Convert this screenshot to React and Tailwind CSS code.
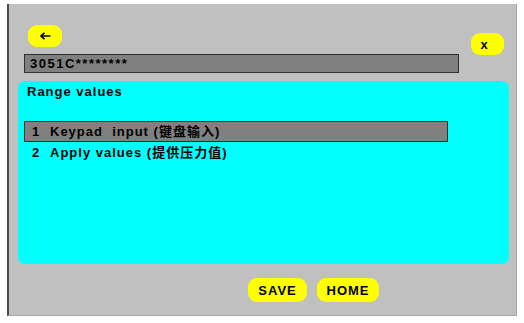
import React from 'react';

const font = { fontFamily: '"Liberation Sans", "Noto Sans CJK SC", Arial, sans-serif' };

const PillButton = ({ children, className = '' }) => (
  <button
    className={`flex items-center justify-center bg-[#ffff00] rounded-[9px] text-[13px] font-bold tracking-[1px] text-black leading-none ${className}`}
  >
    {children}
  </button>
);

const MenuRow = ({ num, label, selected }) => (
  <div
    className={`flex items-center h-[21px] w-[424px] ml-[6px] pl-[7px] text-[13px] font-bold tracking-[1px] text-black whitespace-pre ${
      selected ? 'bg-[#808080] border border-[#303030]' : 'border border-transparent'
    }`}
  >
    <span className="w-[18px]">{num}</span>
    <span>{label}</span>
  </div>
);

export default function App() {
  return (
    <div className="w-[524px] h-[323px] bg-white pt-[4px] pl-[7px]" style={font}>
      <div className="w-[510px] h-[312px] bg-[#c0c0c0] border-l-2 border-l-[#4a4a4a] border-r border-b border-r-[#a8a8a8] border-b-[#a8a8a8] flex flex-col">
        <div className="flex justify-between items-start h-[50px] pt-[21px] pl-[19px] pr-[12px]">
          <PillButton className="w-[34px] h-[22px]">
            <svg width="11" height="8" viewBox="0 0 11 8">
              <path d="M1 4 H10.5 M4.5 0.8 L1 4 L4.5 7.2" stroke="#000" strokeWidth="1.6" fill="none" />
            </svg>
          </PillButton>
          <PillButton className="w-[33px] h-[22px] mt-[8px] text-[12px] pr-[6px]">x</PillButton>
        </div>

        <div className="ml-[15px] w-[435px] h-[19px] bg-[#808080] border border-[#303030] flex items-center pl-[5px] text-[13px] font-bold tracking-[1.5px] text-black">
          3051C********
        </div>

        <div className="mt-[8px] ml-[9px] w-[491px] h-[183px] bg-[#00ffff] rounded-[7px] pt-[3px]">
          <div className="pl-[9px] h-[37px] text-[13px] font-bold tracking-[1px] text-black leading-[15px]">
            Range values
          </div>
          <MenuRow num="1" label="Keypad  input (键盘输入)" selected />
          <MenuRow num="2" label="Apply values (提供压力值)" />
        </div>

        <div className="flex gap-[10px] mt-[14px] ml-[239px]">
          <PillButton className="w-[59px] h-[24px]">SAVE</PillButton>
          <PillButton className="w-[62px] h-[24px]">HOME</PillButton>
        </div>
      </div>
    </div>
  );
}
